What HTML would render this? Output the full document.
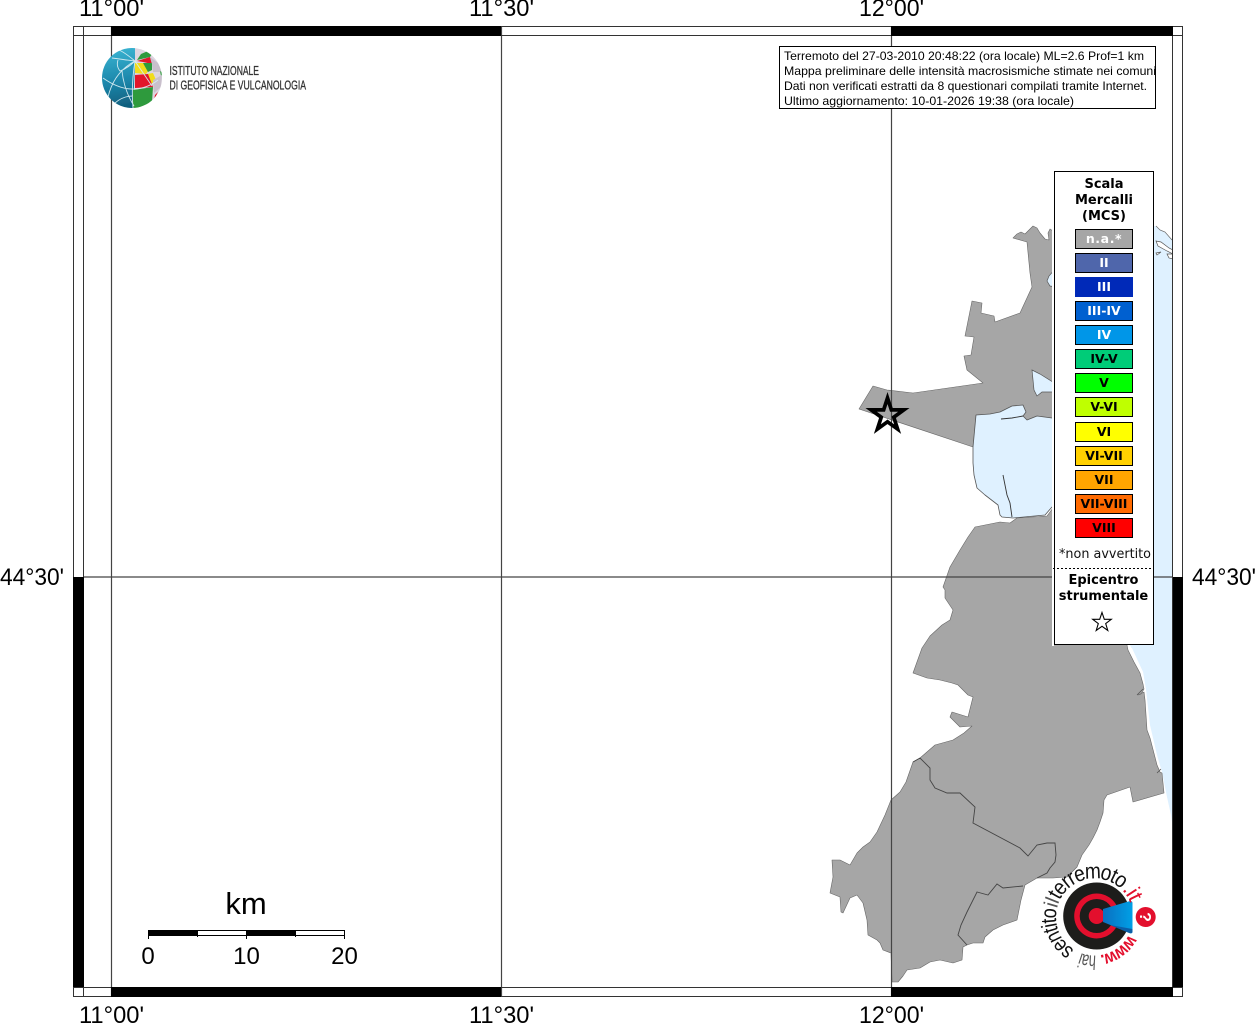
<!DOCTYPE html>
<html><head><meta charset="utf-8"><title>Mappa intensità</title>
<style>
html,body{margin:0;padding:0;background:#fff;width:1256px;height:1024px;overflow:hidden}
svg{display:block}
.ax{font-family:"Liberation Sans",sans-serif;font-size:24px;fill:#000}
.hd{font-family:"Liberation Sans",sans-serif;font-size:12px;fill:#000}
.lg{font-family:"DejaVu Sans",sans-serif;font-size:13px;font-weight:bold;fill:#000;text-anchor:middle}
.bx{font-family:"DejaVu Sans",sans-serif;font-size:12.5px;font-weight:bold;text-anchor:middle}
</style></head><body>
<svg width="1256" height="1024" viewBox="0 0 1256 1024" xmlns="http://www.w3.org/2000/svg">
<defs>
<clipPath id="map"><rect x="83" y="36" width="1090" height="951"/></clipPath>
<clipPath id="globe"><circle cx="132" cy="78" r="30"/></clipPath>
<clipPath id="hdr"><rect x="780" y="47" width="376" height="62"/></clipPath>
<filter id="soft" x="-5%" y="-5%" width="110%" height="110%"><feGaussianBlur stdDeviation=".35"/></filter>
<linearGradient id="gb" x1="0.3" y1="0" x2="0.45" y2="1"><stop offset="0" stop-color="#3ab4d2"/><stop offset="0.55" stop-color="#1b86aa"/><stop offset="1" stop-color="#0f5a78"/></linearGradient>
<linearGradient id="cone" x1="0" y1="0" x2="1" y2="0"><stop offset="0" stop-color="#0a6fc0"/><stop offset="1" stop-color="#00a0e6"/></linearGradient>
<path id="ring" d="M1094.5 873 A44 44 0 1 1 1094.5 961 A44 44 0 1 1 1094.5 873 A44 44 0 1 1 1094.5 961 A44 44 0 1 1 1094.5 873"/>
</defs>

<g clip-path="url(#map)">
<path fill="#dff1ff" d="M1100 230 L1156 226 L1160 230 L1165 232 L1172 240 L1173 243 L1173 829 L1171 815 L1167 797 L1162 772 L1157 755 L1150 725 L1146 690 L1143 672 L1130 645 L1100 645Z"/>
<path fill="none" stroke="#666" stroke-width=".7" d="M1156 226 L1160 230 L1165 232 L1172 240"/>
<path fill="#fff" stroke="#555" stroke-width=".7" d="M1156 241 L1161 242 L1169 248 L1173 250 L1173 254 L1167 251 L1158 246Z M1156 253 L1161 252 L1157 255Z M1167 254 L1173 254 L1173 259 L1169 258Z"/>
<path fill="#fff" d="M1128 648 L1132 648 L1143 672 L1146 690 L1148 715 L1143 695Z"/>
<path fill="#a6a6a6" stroke="#666" stroke-width=".6" stroke-linejoin="round" d="M1013 238 L1017 234 L1021 232 L1025 234 L1029 230 L1033 226 L1037 228 L1040 233 L1045 239 L1049 240 L1048 233 L1050 229 L1053 231 L1060 240 L1120 300 L1126 640 L1128 650 L1134 662 L1140 673 L1143 684 L1144 689 L1141 694 L1138 695 L1144 692 L1145 700 L1147 730 L1150 738 L1157 765 L1160 772 L1162 773 L1164 793 L1133 802 L1130 787 L1107 795 L1104 800 L1103 813 L1100 822 L1097 830 L1093 838 L1089 845 L1082 855 L1077 867 L1067 877 L1053 878 L1037 878 L1025 885 L1021 900 L1017 920 L1003 925 L993 930 L985 937 L983 943 L973 943 L967 945 L963 947 L962 960 L953 963 L940 960 L930 962 L920 968 L907 970 L903 976 L898 982 L892 982 L891 953 L883 950 L880 943 L877 940 L868 935 L867 920 L863 903 L857 895 L850 898 L843 913 L841 912 L840 897 L830 893 L833 877 L832 860 L840 860 L850 865 L857 853 L863 847 L870 842 L877 832 L885 815 L891 800 L900 792 L906 782 L913 762 L920 758 L935 745 L953 740 L964 733 L972 726 L960 727 L950 717 L952 712 L968 717 L973 697 L968 695 L958 685 L952 683 L940 680 L927 678 L913 673 L922 648 L930 636 L942 625 L950 620 L953 610 L945 598 L945 590 L943 587 L950 567 L960 550 L968 537 L975 527 L985 525 L1000 522 L1010 523 L1017 518 L1047 516 L1053 508 L1062 500 L1060 450 L1030 420 L973 447 L859 409 L873 386 L887 390 L913 393 L983 383 L967 370 L964 356 L971 355 L974 337 L965 336 L972 301 L982 303 L981 313 L994 316 L995 322 L1020 313 L1032 287 L1030 273 L1027 242Z"/>
<path fill="#dff1ff" stroke="#555" stroke-width=".8" stroke-linejoin="round" d="M973 447 L973 463 L974 475 L977 488 L985 495 L998 505 L1000 515 L1002 517 L1013 518 L1045 515 L1052 507 L1060 500 L1060 418 L1052 418 L1037 416 L1027 420 L1023 416 L1026 412 L1023 405 L1012 406 L1000 412 L990 414 L976 415Z"/>
<path fill="none" stroke="#333" stroke-width=".9" d="M1001 419 L1012 418 L1023 416 M1003 475 L1007 495 L1010 503 L1012 517"/>
<path fill="#dff1ff" stroke="#555" stroke-width=".7" d="M1032 370 L1040 374 L1056 384 L1056 392 L1042 392 L1037 396 L1034 390Z M1056 268 L1049 276 L1047 281 L1050 286 L1056 287Z"/>
<path fill="none" stroke="#444" stroke-width=".9" d="M913 762 L920 758 L930 768 L930 780 L935 788 L947 793 L960 793 L975 807 L973 823 L1020 848 L1028 856 L1037 845 L1047 843 L1055 843 L1056 855 L1055 862 L1050 868 L1047 873 L1037 878 M1023 886 L1003 888 L997 884 L988 895 L977 892 L967 912 L961 925 L958 935 L967 945"/>
<path fill="none" stroke="#555" stroke-width=".8" d="M1143 689 L1137 695 M1157 773 L1161 769"/>
</g>

<!-- grid -->
<g stroke="#444" stroke-width="1.2">
<path d="M111.5 26V996 M501.5 26V996 M891.5 26V996 M83 577H1173"/>
</g>
<!-- frame -->
<g shape-rendering="crispEdges">
<path d="M73.5 26.5H1182.5V996.5H73.5Z M83.5 26V997 M1172.5 26V997 M73 35.5H1183 M73 987.5H1183" fill="none" stroke="#333"/>
<rect x="111" y="26" width="390" height="10" fill="#000"/>
<rect x="891" y="26" width="282" height="10" fill="#000"/>
<rect x="111" y="987" width="390" height="10" fill="#000"/>
<rect x="891" y="987" width="282" height="10" fill="#000"/>
<rect x="73" y="577" width="11" height="410" fill="#000"/>
<rect x="1173" y="577" width="10" height="410" fill="#000"/>
</g>

<!-- axis labels -->
<g class="ax">
<text x="79" y="16" textLength="65" lengthAdjust="spacingAndGlyphs">11°00'</text>
<text x="469" y="16" textLength="65" lengthAdjust="spacingAndGlyphs">11°30'</text>
<text x="859" y="16" textLength="65" lengthAdjust="spacingAndGlyphs">12°00'</text>
<text x="79" y="1023" textLength="65" lengthAdjust="spacingAndGlyphs">11°00'</text>
<text x="469" y="1023" textLength="65" lengthAdjust="spacingAndGlyphs">11°30'</text>
<text x="859" y="1023" textLength="65" lengthAdjust="spacingAndGlyphs">12°00'</text>
<text x="0" y="585" textLength="64" lengthAdjust="spacingAndGlyphs">44°30'</text>
<text x="1192" y="585" textLength="64" lengthAdjust="spacingAndGlyphs">44°30'</text>
</g>

<!-- star -->
<path d="M887.5 398 L891.36 409.88 L903.86 409.9 L893.75 417.23 L897.6 429.1 L887.5 421.77 L877.4 429.1 L881.25 417.23 L871.14 409.9 L883.64 409.88Z" fill="none" stroke="#000" stroke-width="3.7" stroke-miterlimit="10"/>

<!-- INGV logo -->
<g clip-path="url(#globe)">
<g filter="url(#soft)">
<circle cx="132" cy="78" r="31" fill="url(#gb)"/>
<path fill="#ddd6e0" d="M135 46 L166 60 L166 112 L133 112 L135 61Z"/>
<path fill="#2f9a3c" d="M137 60 L141 54 L148 51 L152 54 L150 57Z"/>
<path fill="#e2122c" d="M137 61 L150 57 L152 64 L143 62Z"/>
<path fill="#f1dc1a" d="M135 63 L143 63 L149 70 L146 74 L135 73Z"/>
<path fill="#2f9a3c" d="M143 63 L152 63 L152 70 L148 72Z"/>
<path fill="#c9c0cc" d="M150 57 L158 63 L162 72 L153 72 L152 64Z"/>
<path fill="#2f9a3c" d="M160 71 L163 73 L161 76Z"/>
<path fill="#f1dc1a" d="M147 74 L153 73 L156 80 L151 84Z"/>
<path fill="#e2122c" d="M135 75 L148 74 L153 87 L135 88Z"/>
<path fill="#c9c0cc" d="M153 80 L162 75 L161 87 L154 93Z"/>
<path fill="#2f9a3c" d="M133 90 L153 87 L152 102 L133 110Z"/>
<path fill="#e2122c" d="M155 95 L158 92 L154 100Z"/>
<g fill="none" stroke="#d6ecf2" stroke-width=".9" opacity=".95">
<path d="M135 61 Q131 85 133 108 M135 61 Q114 72 108 97 M135 61 Q124 52 119 50 M118 60 Q116 66 120 71 Q128 68 135 61 M103 78 Q120 90 135 89 Q148 88 158 80 M112 58 Q126 60 135 61 M115 103 Q123 96 133 96 M135 61 L152 86 M122 71 Q124 90 134 106"/>
</g>
</g>
</g>
<g font-family="'Liberation Sans',sans-serif" font-size="13" fill="#333" stroke="#333" stroke-width=".3">
<text x="169.5" y="75" textLength="89.5" lengthAdjust="spacingAndGlyphs">ISTITUTO NAZIONALE</text>
<text x="169.5" y="89.5" textLength="136.5" lengthAdjust="spacingAndGlyphs">DI GEOFISICA E VULCANOLOGIA</text>
</g>

<!-- header -->
<rect x="779.5" y="46.5" width="376" height="62" fill="#fff" stroke="#000"/>
<g class="hd" clip-path="url(#hdr)">
<text x="784" y="60" textLength="360" lengthAdjust="spacingAndGlyphs">Terremoto del 27-03-2010 20:48:22 (ora locale) ML=2.6 Prof=1 km</text>
<text x="784" y="75" textLength="372" lengthAdjust="spacingAndGlyphs">Mappa preliminare delle intensità macrosismiche stimate nei comuni</text>
<text x="784" y="90" textLength="363" lengthAdjust="spacingAndGlyphs">Dati non verificati estratti da 8 questionari compilati tramite Internet.</text>
<text x="784" y="105" textLength="290" lengthAdjust="spacingAndGlyphs">Ultimo aggiornamento: 10-01-2026 19:38 (ora locale)</text>
</g>

<!-- legend -->
<rect x="1054.5" y="171.5" width="99" height="473" fill="#fff" stroke="#000"/>
<rect x="1052" y="172" width="2" height="474" fill="#fff"/>
<g class="lg">
<text x="1104" y="188">Scala</text>
<text x="1104" y="204">Mercalli</text>
<text x="1104" y="220">(MCS)</text>
</g>
<g stroke="#000" shape-rendering="crispEdges">
<rect x="1075.5" y="229.5" width="57" height="19" fill="#a6a6a6"/>
<rect x="1075.5" y="253.5" width="57" height="19" fill="#4f66ab"/>
<rect x="1075.5" y="277.5" width="57" height="19" fill="#0029b8" stroke="#0029b8"/>
<rect x="1075.5" y="301.5" width="57" height="19" fill="#0060d0"/>
<rect x="1075.5" y="325.5" width="57" height="19" fill="#0096e8"/>
<rect x="1075.5" y="349.5" width="57" height="19" fill="#00cc78"/>
<rect x="1075.5" y="373.5" width="57" height="19" fill="#00ff00"/>
<rect x="1075.5" y="397.5" width="57" height="19" fill="#bfff00"/>
<rect x="1075.5" y="422.5" width="57" height="19" fill="#ffff00"/>
<rect x="1075.5" y="446.5" width="57" height="19" fill="#ffd000"/>
<rect x="1075.5" y="470.5" width="57" height="19" fill="#ffa500"/>
<rect x="1075.5" y="494.5" width="57" height="19" fill="#ff6a00"/>
<rect x="1075.5" y="518.5" width="57" height="19" fill="#ff0000"/>
</g>
<g class="bx" fill="#fff">
<text x="1104" y="243" letter-spacing=".6">n.a.*</text>
<text x="1104" y="267">II</text>
<text x="1104" y="291">III</text>
<text x="1104" y="315">III-IV</text>
<text x="1104" y="339">IV</text>
</g>
<g class="bx" fill="#000">
<text x="1104" y="363">IV-V</text>
<text x="1104" y="387">V</text>
<text x="1104" y="411">V-VI</text>
<text x="1104" y="436">VI</text>
<text x="1104" y="460">VI-VII</text>
<text x="1104" y="484">VII</text>
<text x="1104" y="508">VII-VIII</text>
<text x="1104" y="532">VIII</text>
</g>
<text x="1059" y="558" font-family="'DejaVu Sans',sans-serif" font-size="13" fill="#111" textLength="92" lengthAdjust="spacingAndGlyphs">*non avvertito</text>
<path d="M1053 568.5H1152" stroke="#000" stroke-dasharray="2 2" shape-rendering="crispEdges"/>
<g class="lg">
<text x="1103.5" y="584">Epicentro</text>
<text x="1103.5" y="600">strumentale</text>
</g>
<path d="M1102 612.5 L1104.3 619.3 L1111.3 619.3 L1105.7 623.6 L1107.8 630.5 L1102 626.3 L1096.2 630.5 L1098.3 623.6 L1092.7 619.3 L1099.7 619.3Z" fill="#fff" stroke="#000" stroke-width="1.1"/>

<!-- scale bar -->
<g shape-rendering="crispEdges">
<rect x="148" y="930" width="49" height="6" fill="#000"/>
<rect x="246" y="930" width="49" height="6" fill="#000"/>
<path d="M197 930.5H246 M197 935.5H246 M295 930.5H345 M295 935.5H345 M148.5 930V939 M197.5 930V937 M246.5 930V939 M295.5 930V937 M344.5 930V939" stroke="#000" fill="none"/>
</g>
<g class="ax" text-anchor="middle">
<text x="246" y="914" font-size="31">km</text>
<text x="148" y="964">0</text>
<text x="246.5" y="964">10</text>
<text x="344.5" y="964">20</text>
</g>

<!-- hai sentito logo -->
<circle cx="1096.7" cy="916" r="33.5" fill="#1d1d1b"/>
<circle cx="1096.7" cy="916" r="22.5" fill="#e30f2d"/>
<circle cx="1096.7" cy="916" r="17" fill="#1d1d1b"/>
<circle cx="1096.7" cy="916" r="8" fill="#e30f2d"/>
<path d="M1103 909 L1130 901 Q1132.5 901 1132.5 903 L1132.5 931 Q1132.5 934 1130 933 L1103 922Z" fill="url(#cone)"/>
<path d="M1110 925 L1132.5 929 L1132.5 932 Q1132 934 1129 933Z" fill="#0b5fa8"/>
<circle cx="1145.7" cy="917" r="10" fill="#e30f2d"/>
<text x="1145.7" y="922.5" font-family="'Liberation Sans',sans-serif" font-size="16" font-weight="bold" fill="#fff" text-anchor="middle" transform="rotate(90 1145.7 917)">?</text>
<g font-family="'Liberation Sans',sans-serif">
<text font-size="18" font-weight="bold" fill="#e30f2d" dy="5.5"><textPath href="#ring" startOffset="90.6" textLength="41" lengthAdjust="spacingAndGlyphs">www.</textPath></text>
<text font-size="20" fill="#555" dy="5.5"><textPath href="#ring" startOffset="136.7" textLength="17" lengthAdjust="spacingAndGlyphs">hai</textPath></text>
<text font-size="22" fill="#111" dy="5.5"><textPath href="#ring" startOffset="162.8" textLength="53" lengthAdjust="spacingAndGlyphs">sentito</textPath></text>
<text font-size="20" fill="#555" dy="5.5"><textPath href="#ring" startOffset="217" textLength="9" lengthAdjust="spacingAndGlyphs">il</textPath></text>
<text font-size="22" fill="#111" dy="5.5"><textPath href="#ring" startOffset="227" textLength="82" lengthAdjust="spacingAndGlyphs">terremoto</textPath></text>
<text font-size="22" fill="#e30f2d" dy="5.5"><textPath href="#ring" startOffset="311" textLength="17" lengthAdjust="spacingAndGlyphs">.it</textPath></text>
</g>
</svg>
</body></html>
